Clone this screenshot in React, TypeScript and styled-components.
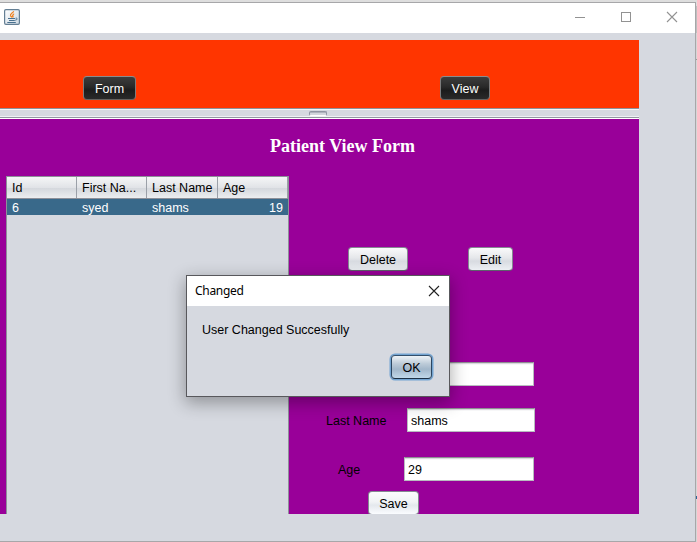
import React from "react";
import styled, { createGlobalStyle, css } from "styled-components";

const GlobalStyle = createGlobalStyle`
  * { box-sizing: border-box; }
  body {
    margin: 0;
    overflow: hidden;
    background: #d3d3d3;
    font: 12.5px/14px "Liberation Sans", Arial, sans-serif;
    color: #000;
  }
`;

const Desktop = styled.div`
  width: 697px;
  height: 542px;
  padding-top: 2px;
  overflow: hidden;
  background: linear-gradient(#dedede 0 6px, #bfbfbf 6px 33px, #d6d6d6 33px 59px, #999 59px 60px, #d6d6d6 60px 496px, #2f6496 496px 499px, #d6d6d6 499px);
`;

const Window = styled.div`
  width: 696px;
  height: 540px;
  display: flex;
  flex-direction: column;
  border: solid #a7a7a9;
  border-width: 1px 1px 1px 0;
  background: #d6d9e0;
`;

const TitleBar = styled.header`
  height: 30px;
  flex: none;
  display: flex;
  align-items: center;
  justify-content: space-between;
  padding: 0 17px 2px 4px;
  background: #fff;
`;

const WindowControls = styled.div`
  display: flex;
  gap: 34px;
`;

const Content = styled.main`
  width: 639px;
  margin-top: 7px;
`;

const TopPane = styled.section`
  height: 68px;
  display: flex;
  gap: 304px;
  padding: 36px 0 0 83px;
  background: #ff3500;
`;

const Divider = styled.div`
  height: 11px;
  display: flex;
  justify-content: center;
  padding: 3px 3px 0 0;
  background: linear-gradient(#8e929b 0 1px, #f4f5f7 1px 2px, #d6d9e0 2px 8px, #f0f1f4 8px 9px, #9297a1 9px 10px, #fff 10px 11px);
`;

const Grip = styled.div`
  width: 18px;
  height: 5px;
  border: 1px solid #8f95a2;
  border-bottom-color: #fff;
  border-radius: 2px;
  background: linear-gradient(#aeb3bd 0 1px, #d3d6dc 1px);
`;

const ViewPane = styled.section`
  height: 395px;
  overflow: hidden;
  background: #990099;
`;

const Heading = styled.h1`
  height: 57px;
  margin: 0;
  padding: 17px 0 0 270px;
  font: bold 18px/20px "Liberation Serif", "Times New Roman", serif;
  white-space: nowrap;
  color: #fff;
`;

const Columns = styled.div`
  display: flex;
  height: 338px;
  padding-left: 6px;
`;

const TablePane = styled.div`
  width: 283px;
  height: 345px;
  flex: none;
  border: 1px solid #8d9099;
  background: #d6d9e0;
`;

const TableRow = styled.div<{ $header?: boolean }>`
  display: grid;
  grid-template-columns: 70px 70px 71px 70px;
  ${({ $header }) => $header
    ? css`
        height: 22px;
        border-bottom: 1px solid #8d9099;
        background: linear-gradient(#f5f6f7, #e1e3e7 50%, #d5d8dd 55%, #eceef0);
      `
    : css`
        height: 16px;
        color: #fff;
        background: #39698a;
      `}
`;

const Cell = styled.span<{ $header?: boolean; $right?: boolean }>`
  padding: ${({ $header }) => ($header ? "4px 0 0 5px" : "2px 5px 0")};
  border-right: ${({ $header }) => ($header ? "1px solid #9ba0a8" : "0")};
  text-align: ${({ $right }) => ($right ? "right" : "left")};
  white-space: nowrap;
`;

const Form = styled.div`
  width: 350px;
  padding-top: 71px;
`;

const Actions = styled.div`
  display: flex;
  gap: 60px;
  padding-left: 59px;
  margin-bottom: 91px;
`;

const Field = styled.label<{ $indent: number; $labelWidth: number; $gap: number }>`
  display: grid;
  grid-template-columns: ${({ $labelWidth }) => $labelWidth}px auto;
  justify-content: start;
  align-items: center;
  padding-left: ${({ $indent }) => $indent}px;
  margin-bottom: ${({ $gap }) => $gap}px;
  white-space: nowrap;
`;

const FieldName = styled.span`
  padding-top: 1px;
`;

const TextInput = styled.input<{ $width: number }>`
  width: ${({ $width }) => $width}px;
  height: 24px;
  padding: 1px 3px 0;
  border: 1px solid #b9bcc0;
  border-top-color: #8e8e93;
  border-radius: 0;
  outline: 0;
  font: inherit;
  background: linear-gradient(#d9d9dc 0 1px, #f7f7f8 1px 2px, #fff 2px);
`;

const Button = styled.button<{ $width: number; $tone?: "dark" | "focus" }>`
  width: ${({ $width }) => $width}px;
  height: 24px;
  flex: none;
  display: block;
  padding: 1px 0 0;
  border: 1px solid #858a92;
  border-bottom-color: #5d626b;
  border-radius: 4px;
  font: inherit;
  color: #000;
  background: linear-gradient(#fafafb, #e5e7ea 45%, #d8dbe1 60%, #eceff3);
  ${({ $tone }) => $tone === "dark" && css`
    color: #fff;
    border-color: #8c8c8c #7c7c7c #66625f;
    background: linear-gradient(#3d3d3d, #292929 45%, #1c1c1c 60%, #292929);
  `}
  ${({ $tone }) => $tone === "focus" && css`
    border-color: #344f6b #2c4661 #1c3044;
    box-shadow: 0 0 0 1.5px #73a4d1;
    background: linear-gradient(#eef3f7, #bdcbd8 35%, #a2b7ca 60%, #c0d7e9);
  `}
`;

const SaveButton = styled(Button)`
  margin-left: 79px;
  background: linear-gradient(#fcfcfd, #f1f3f5 45%, #e4e8ed 60%, #fafcff);
`;

const Dialog = styled.div`
  position: absolute;
  left: 186px;
  top: 275px;
  width: 264px;
  height: 122px;
  border: 1px solid #58585c;
  background: #d6d9e0;
  box-shadow: 0 5px 16px 1px rgba(0, 0, 0, 0.32);
`;

const DialogTitle = styled.div`
  height: 30px;
  display: flex;
  justify-content: space-between;
  align-items: center;
  padding: 0 9px 1px 8px;
  font: 12px/16px "Noto Sans", sans-serif;
  letter-spacing: -0.3px;
  background: #fff;
`;

const DialogBody = styled.div`
  display: flex;
  flex-direction: column;
  padding: 17px 17px 0 15px;
`;

const Message = styled.p`
  height: 32px;
  margin: 0;
  white-space: nowrap;
`;

const DialogActions = styled.div`
  display: flex;
  justify-content: flex-end;
`;

const JavaIcon = () => (
  <svg width="16" height="16" viewBox="0 0 16 16" fill="none">
    <defs>
      <linearGradient id="java-tile" x1="0" y1="0" x2="1" y2="1">
        <stop stopColor="#fff" /><stop offset="1" stopColor="#ccd8e2" />
      </linearGradient>
    </defs>
    <rect x=".6" y=".6" width="14.8" height="14.8" rx="1.3" fill="url(#java-tile)" stroke="#647f94" strokeWidth="1.2" />
    <path d="M9.7 2.2C9 4 5.7 4.8 6.5 6.8L8 8.4C7.5 6.5 9.5 6.2 9.9 4.6M9.6 5.3c-2 1.4.3 1.6-.8 3.2" stroke="#ee8425" strokeWidth="1.2" />
    <path d="M4 9.5h7M5 11.5h5.8M3.3 13.5h8.5M11.6 9.2c2.3-.5 2 1.8-.4 2" stroke="#49718f" strokeWidth="1" />
  </svg>
);

const ControlIcon = ({ kind }: { kind: "min" | "max" | "close" }) => (
  <svg width="12" height="12" viewBox="0 0 12 12" fill="none" stroke="#929292">
    {kind === "min" && <path d="M1 6.5h10" />}
    {kind === "max" && <rect x="1.5" y="1.5" width="9" height="9" />}
    {kind === "close" && <path d="M1 1l10 10M11 1L1 11" strokeWidth="1.1" />}
  </svg>
);

const headers = ["Id", "First Na...", "Last Name", "Age"];
const values = ["6", "syed", "shams", "19"];

export default function App() {
  return (
    <>
      <GlobalStyle />
      <Desktop>
        <Window>
          <TitleBar>
            <JavaIcon />
            <WindowControls>
              <ControlIcon kind="min" />
              <ControlIcon kind="max" />
              <ControlIcon kind="close" />
            </WindowControls>
          </TitleBar>
          <Content>
            <TopPane>
              <Button $width={53} $tone="dark">Form</Button>
              <Button $width={50} $tone="dark">View</Button>
            </TopPane>
            <Divider><Grip /></Divider>
            <ViewPane>
              <Heading>Patient View Form</Heading>
              <Columns>
                <TablePane>
                  <TableRow $header>
                    {headers.map((h) => <Cell key={h} $header>{h}</Cell>)}
                  </TableRow>
                  <TableRow>
                    {values.map((v, i) => <Cell key={v} $right={i === 3}>{v}</Cell>)}
                  </TableRow>
                </TablePane>
                <Form>
                  <Actions>
                    <Button $width={60}>Delete</Button>
                    <Button $width={45}>Edit</Button>
                  </Actions>
                  <Field $indent={37} $labelWidth={80} $gap={22}>
                    <FieldName />
                    <TextInput $width={128} />
                  </Field>
                  <Field $indent={37} $labelWidth={81} $gap={25}>
                    <FieldName>Last Name</FieldName>
                    <TextInput $width={128} defaultValue="shams" />
                  </Field>
                  <Field $indent={49} $labelWidth={66} $gap={10}>
                    <FieldName>Age</FieldName>
                    <TextInput $width={130} defaultValue="29" />
                  </Field>
                  <SaveButton $width={51}>Save</SaveButton>
                </Form>
              </Columns>
            </ViewPane>
          </Content>
        </Window>
      </Desktop>
      <Dialog role="dialog">
        <DialogTitle>
          Changed
          <svg width="12" height="12" viewBox="0 0 12 12" stroke="#222" strokeWidth="1.1">
            <path d="M1 1l10 10M11 1L1 11" />
          </svg>
        </DialogTitle>
        <DialogBody>
          <Message>User Changed Succesfully</Message>
          <DialogActions><Button $width={41} $tone="focus">OK</Button></DialogActions>
        </DialogBody>
      </Dialog>
    </>
  );
}
